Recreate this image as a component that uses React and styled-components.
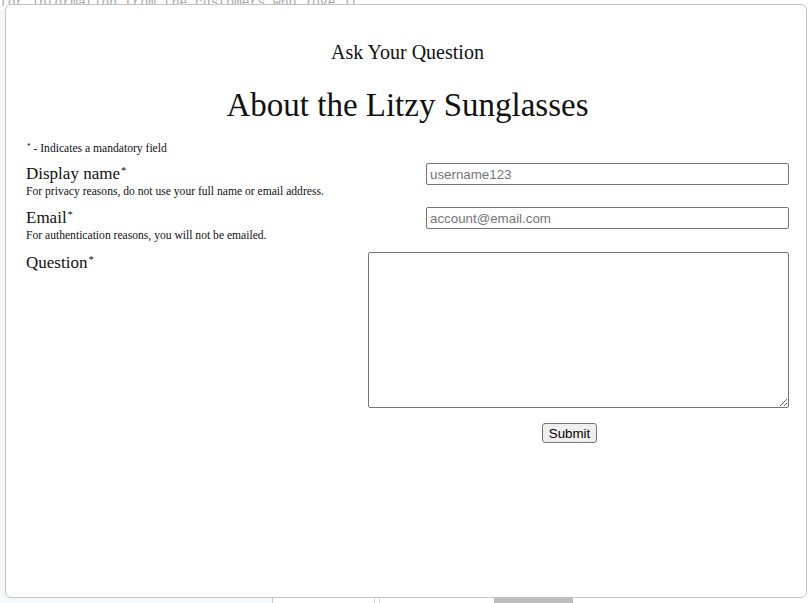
import React from 'react';
import styled, { createGlobalStyle } from 'styled-components';

const GlobalStyle = createGlobalStyle`
  html, body {
    margin: 0;
    background: #ffffff;
  }
  * {
    box-sizing: border-box;
  }
`;

const Page = styled.div`
  position: relative;
  height: 603px;
  overflow: hidden;
  font-family: "Liberation Serif", "Times New Roman", serif;
  color: #111;
`;

const BgTagline = styled.div`
  margin-top: -5px;
  font-family: "Liberation Mono", monospace;
  font-size: 13px;
  line-height: 15px;
  color: #a8a8a8;
  white-space: nowrap;
`;

const BgColumns = styled.div`
  display: grid;
  grid-template-columns: 273px 102px 5px 114px 79px 1fr;
  height: 600px;
`;

const BgCol = styled.div`
  background: ${props => props.fill || '#fff'};
  border-right: 1px solid ${props => props.line || 'transparent'};
`;

const Overlay = styled.div`
  position: absolute;
  top: 4px;
  left: 5px;
  right: 5px;
  bottom: 5px;
  background: #fff;
  border: 1px solid #c4c4c4;
  border-radius: 6px;
  padding: 35px 17px 0 20px;
`;

const Subtitle = styled.div`
  text-align: center;
  font-size: 20px;
  line-height: 24px;
`;

const Heading = styled.h1`
  margin: 21px 0 0;
  text-align: center;
  font-weight: normal;
  font-size: 33px;
  line-height: 40px;
`;

const Note = styled.div`
  margin-top: 17px;
  font-size: 11.6px;
  line-height: 14px;
`;

const Req = styled.span`
  font-size: 0.62em;
  vertical-align: 0.45em;
  line-height: 0;
  margin-left: 1px;
`;

const Form = styled.form`
  margin-top: 7px;
  display: flex;
  flex-direction: column;
`;

const Row = styled.div`
  display: flex;
  justify-content: space-between;
  align-items: flex-start;
  margin-bottom: ${props => props.gap}px;
`;

const LabelBlock = styled.div`
  display: flex;
  flex-direction: column;
`;

const Label = styled.label`
  font-size: 17px;
  line-height: 22px;
`;

const Hint = styled.span`
  font-size: 11.6px;
  line-height: 14px;
`;

const TextInput = styled.input`
  width: 363px;
  height: 22px;
  padding: 1px 3px;
  border: 1px solid #767676;
  border-radius: 2px;
  font-family: "Liberation Sans", Arial, sans-serif;
  font-size: 13.33px;
  color: #111;
  &::placeholder {
    color: #757575;
  }
`;

const QuestionArea = styled.textarea`
  width: 421px;
  height: 156px;
  border: 1px solid #767676;
  border-radius: 2px;
  resize: both;
  font-family: "Liberation Mono", monospace;
  font-size: 13px;
`;

const ButtonRow = styled.div`
  display: flex;
  justify-content: center;
  align-self: flex-end;
  width: 421px;
  padding-right: 18px;
  margin-top: 15px;
`;

const SubmitButton = styled.button`
  height: 20px;
  padding: 1px 6px;
  border: 1px solid #767676;
  border-radius: 3px;
  background: #efefef;
  font-family: "Liberation Sans", Arial, sans-serif;
  font-size: 13.33px;
  line-height: 15px;
  color: #000;
`;

const fields = [
  { name: 'display', label: 'Display name', hint: 'For privacy reasons, do not use your full name or email address.', placeholder: 'username123', gap: 8 },
  { name: 'email', label: 'Email', hint: 'For authentication reasons, you will not be emailed.', placeholder: 'account@email.com', gap: 9 },
];

const App = () => {
  return (
    <Page>
      <GlobalStyle />
      <BgTagline>for information from the customers who love it</BgTagline>
      <BgColumns>
        <BgCol fill="#f7f8fa" line="#c9c9c9" />
        <BgCol line="#d0d0d0" />
        <BgCol line="#d6d6d6" />
        <BgCol />
        <BgCol fill="#bdbdbd" />
        <BgCol />
      </BgColumns>

      <Overlay>
        <Subtitle>Ask Your Question</Subtitle>
        <Heading>About the Litzy Sunglasses</Heading>
        <Note><Req>*</Req> - Indicates a mandatory field</Note>
        <Form onSubmit={e => e.preventDefault()}>
          {fields.map(f => (
            <Row key={f.name} gap={f.gap}>
              <LabelBlock>
                <Label htmlFor={f.name}>{f.label}<Req>*</Req></Label>
                <Hint>{f.hint}</Hint>
              </LabelBlock>
              <TextInput id={f.name} placeholder={f.placeholder} />
            </Row>
          ))}
          <Row gap={0}>
            <LabelBlock>
              <Label htmlFor="question">Question<Req>*</Req></Label>
            </LabelBlock>
            <QuestionArea id="question" />
          </Row>
          <ButtonRow>
            <SubmitButton type="submit">Submit</SubmitButton>
          </ButtonRow>
        </Form>
      </Overlay>
    </Page>
  );
};

export default App;
